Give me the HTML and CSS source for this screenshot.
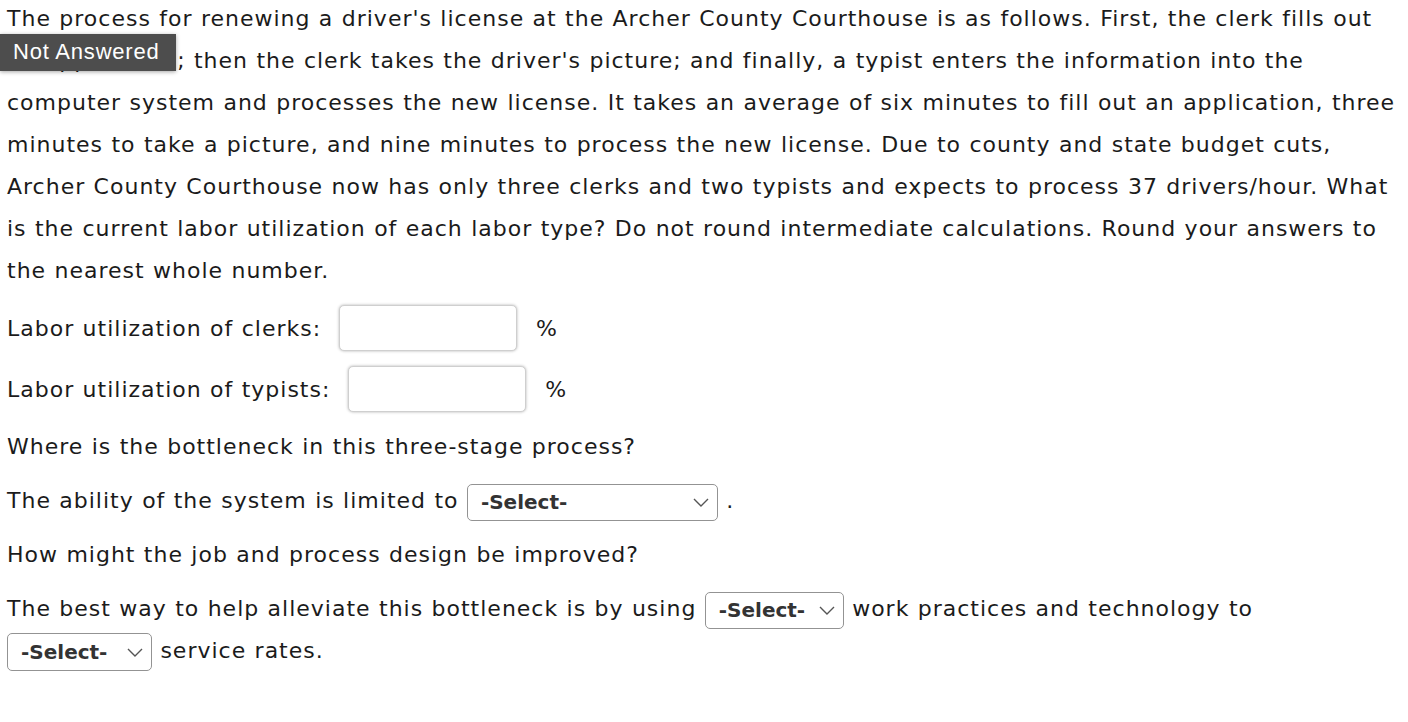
FILE: index.html
```html
<!DOCTYPE html>
<html lang="en">
<head>
    <meta charset="UTF-8">
    <title>Labor utilization question</title>
    <link rel="stylesheet" href="styles.css">
</head>
<body>
    <div class="question">
        <!-- status tag sits over the stem -->
        <span class="status-tag">Not Answered</span>

        <p class="stem">The process for renewing a driver's license at the Archer County Courthouse is as follows. First, the clerk fills out an application; then the clerk takes the driver's picture; and finally, a typist enters the information into the computer system and processes the new license. It takes an average of six minutes to fill out an application, three minutes to take a picture, and nine minutes to process the new license. Due to county and state budget cuts, Archer County Courthouse now has only three clerks and two typists and expects to process 37 drivers/hour. What is the current labor utilization of each labor type? Do not round intermediate calculations. Round your answers to the nearest whole number.</p>

        <div class="answer-row">
            <label for="clerks">Labor utilization of clerks:</label>
            <input type="text" id="clerks" class="num-input">
            <span class="unit">%</span>
        </div>

        <div class="answer-row">
            <label for="typists">Labor utilization of typists:</label>
            <input type="text" id="typists" class="num-input">
            <span class="unit">%</span>
        </div>

        <p class="line">Where is the bottleneck in this three-stage process?</p>

        <p class="line">The ability of the system is limited to <span class="select select-wide">-Select-<svg class="chev" viewBox="0 0 16 9"><polyline points="1,1 8,8 15,1"/></svg></span> .</p>

        <p class="line">How might the job and process design be improved?</p>

        <p class="line">The best way to help alleviate this bottleneck is by using <span class="select select-mid">-Select-<svg class="chev" viewBox="0 0 16 9"><polyline points="1,1 8,8 15,1"/></svg></span> work practices and technology to <span class="select select-last">-Select-<svg class="chev" viewBox="0 0 16 9"><polyline points="1,1 8,8 15,1"/></svg></span> service rates.</p>
    </div>
</body>
</html>
```

FILE: styles.css
```css
body {
    margin: 0;
    padding: 0 10px 0 7px;
    background: #fff;
    color: #1b1b1b;
    font-family: "DejaVu Sans", Verdana, sans-serif;
    font-size: 22px;
    letter-spacing: 1px;
    word-spacing: 0.4px;
}
.question {
    position: relative;
}
.stem {
    margin: -2px 0 0;
    line-height: 42px;
}
.status-tag {
    position: absolute;
    left: -7px;
    top: 36px;
    box-sizing: border-box;
    height: 37px;
    padding: 5px 16px 0 13px;
    background: #4d4d4d;
    color: #fff;
    font-family: "Liberation Sans", Arial, sans-serif;
    font-size: 22px;
    letter-spacing: 0.8px;
    word-spacing: 0;
    box-shadow: 0 1px 4px rgba(0, 0, 0, 0.35);
    z-index: 5;
}
.answer-row {
    display: flex;
    align-items: center;
    margin: 13px 0 0;
}
.answer-row + .answer-row {
    margin-top: 15px;
}
.num-input {
    box-sizing: border-box;
    width: 178px;
    height: 46px;
    margin: 0 19px 0 18px;
    padding: 0;
    border: 1px solid #cfcfcf;
    border-radius: 5px;
    box-shadow: 0 0 3px rgba(0, 0, 0, 0.3);
    background: #fff;
}
.line {
    margin: 12px 0 0;
    line-height: 42px;
}
.answer-row + .line {
    margin-top: 14px;
}
.select {
    display: inline-flex;
    align-items: center;
    justify-content: space-between;
    box-sizing: border-box;
    height: 37px;
    padding: 0 8px 0 13px;
    border: 1.5px solid #939393;
    border-radius: 5px;
    font-weight: bold;
    font-size: 20px;
    letter-spacing: 0;
    word-spacing: 0;
    color: #333;
    vertical-align: middle;
}
.select-wide {
    width: 251px;
}
.select-mid {
    width: 139px;
}
.select-last {
    width: 145px;
    height: 38px;
}
.chev {
    width: 16px;
    height: 9px;
    fill: none;
    stroke: #555;
    stroke-width: 1.4;
}
```
